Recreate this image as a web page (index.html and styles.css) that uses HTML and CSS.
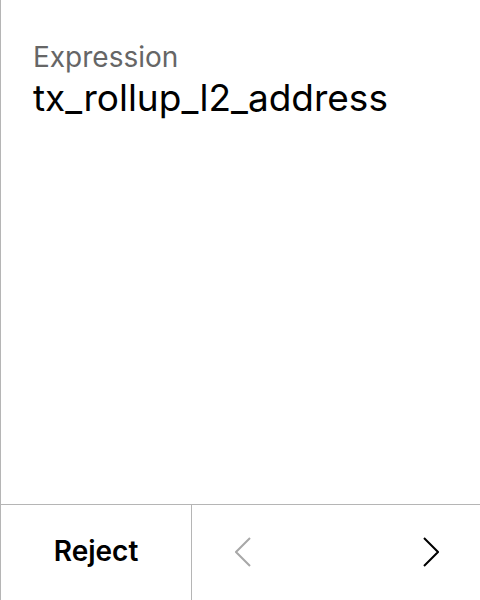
FILE: index.html
```html
<!DOCTYPE html>
<html>
<head>
<meta charset="utf-8">
<link rel="stylesheet" href="styles.css">
</head>
<body>
<div class="panel">
  <div class="content">
    <div class="label">Expression</div>
    <div class="value">tx_rollup_l2_address</div>
  </div>
  <div class="footer">
    <button class="reject">Reject</button>
    <div class="nav">
      <svg class="chev prev" width="16" height="30" viewBox="0 0 16 30"><polyline points="15,1 1,15 15,29" fill="none" stroke="currentColor" stroke-width="2"/></svg>
      <svg class="chev next" width="16" height="30" viewBox="0 0 16 30"><polyline points="1,1 15,15 1,29" fill="none" stroke="currentColor" stroke-width="2"/></svg>
    </div>
  </div>
</div>
</body>
</html>
```
FILE: styles.css
```css
html, body { margin: 0; padding: 0; background: #fff; }
body { font-family: Inter, "Noto Sans", sans-serif; }
.panel {
  width: 480px; height: 600px; box-sizing: border-box;
  border-left: 1px solid #b5b5b5;
  display: flex; flex-direction: column;
}
.content { flex: 1; padding: 40px 0 0 32px; }
.label { font-size: 28px; color: #666; line-height: 34px; }
.value { font-size: 37px; color: #000; line-height: 44px; margin-top: 2px; }
.footer {
  height: 96px; box-sizing: border-box; border-top: 1px solid #b5b5b5;
  display: grid; grid-template-columns: 191px 1fr;
}
.reject {
  border: none; background: none; border-right: 1px solid #b5b5b5;
  font-family: inherit; font-size: 28px; font-weight: 600; color: #000;
  padding: 0 0 3px 0; margin: 0;
}
.nav { display: flex; align-items: center; justify-content: space-between; padding: 0 41px 1px 43px; }
.chev.prev { color: #a8a8a8; }
.chev.next { color: #000; }
```
